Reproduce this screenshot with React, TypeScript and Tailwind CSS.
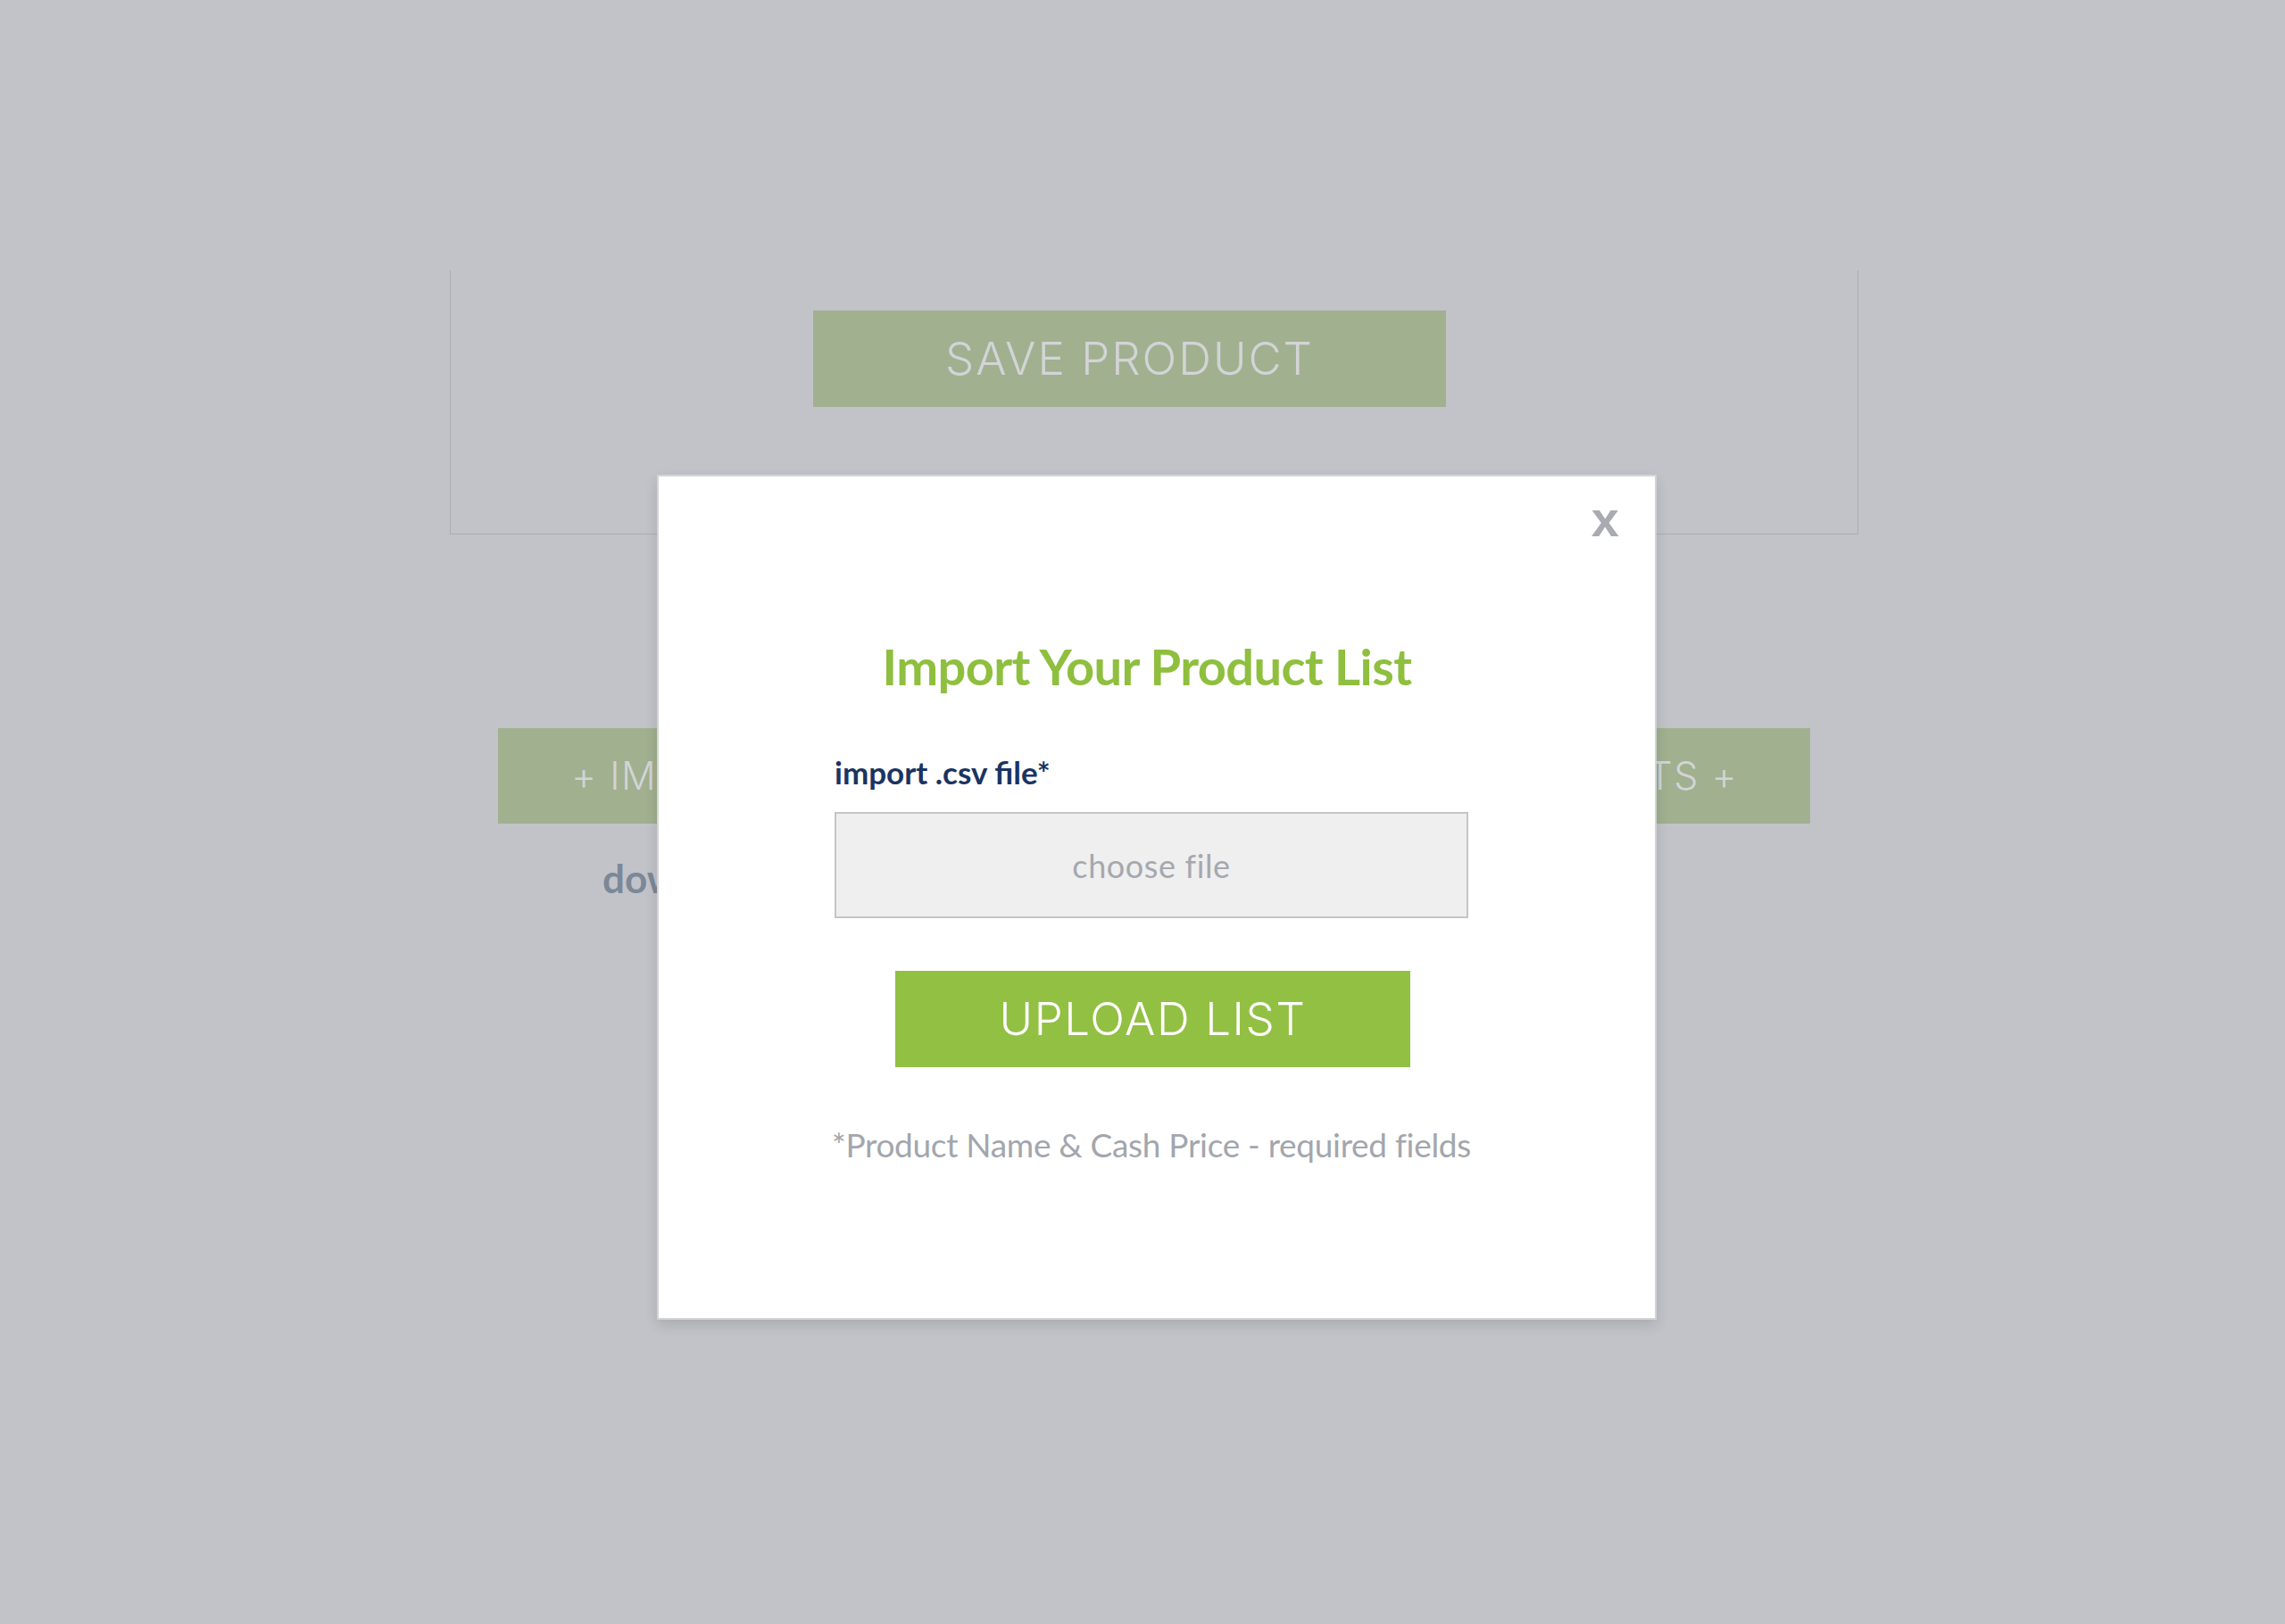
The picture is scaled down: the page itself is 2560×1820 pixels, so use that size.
import React from "react";

export default function App() {
  return (
    <div className="relative min-h-[1820px] w-full overflow-hidden bg-[#c1c3c8] font-[Lato,sans-serif]">
      {/* Background page (dimmed) */}
      <div className="ml-[504px] w-[1578px] pt-[303px]">
        <div className="h-[296px] border-x border-b border-[#abadb2] pl-[406px] pt-[45px]">
          <div className="flex h-[108px] w-[709px] items-center justify-center bg-[#a1b08f] font-[Inter,sans-serif] text-[51px] font-light tracking-[2px] text-[#d2d4d7]">
            SAVE PRODUCT
          </div>
        </div>

        <div className="mt-[217px] flex gap-[30px] px-[54px]">
          <div className="flex h-[107px] flex-1 items-center justify-start bg-[#a1b08f] pl-[82px] font-[Inter,sans-serif] text-[43px] font-light tracking-[1.5px] text-[#d2d4d7]">
            + IMPORT
          </div>
          <div className="flex h-[107px] flex-1 items-center justify-end bg-[#a1b08f] pr-[81px] font-[Inter,sans-serif] text-[43px] font-light tracking-[1.5px] text-[#d2d4d7]">
            EXPORT PRODUCTS +
          </div>
        </div>

        <div className="mt-[39px] pl-[171px] text-[44px] font-bold leading-[44px] text-[#7b8898]">
          download .csv template
        </div>
      </div>

      {/* Modal */}
      <div className="absolute left-[736px] top-[532px] h-[947px] w-[1120px] border-2 border-[#d4d5d9] bg-white shadow-[0_6px_14px_rgba(0,0,0,0.12)]">
        <button className="absolute right-[40px] top-[20px] font-['Liberation_Sans',Arial,sans-serif] text-[56px] font-bold leading-[56px] text-[#a9abb1]">
          x
        </button>

        <div className="ml-[197px] flex w-[710px] flex-col pt-[185px]">
          <h2 className="mr-[10px] whitespace-nowrap text-center text-[56px] font-bold leading-[56px] tracking-[-0.6px] text-[#8fbf3f]">
            Import Your Product List
          </h2>

          <label className="mt-[72px] text-[35px] font-bold leading-[36px] text-[#1b3461]">
            import .csv file*
          </label>

          <div className="mt-[27px] flex h-[119px] items-center justify-center border-2 border-[#c4c5c8] bg-[#efeff0] text-[36px] tracking-[0.6px] text-[#a5a8ae]">
            choose file
          </div>

          <button className="ml-[68px] mt-[59px] flex h-[108px] w-[577px] items-center justify-center bg-[#92c043] font-[Inter,sans-serif] text-[51px] font-light tracking-[1.6px] text-white">
            UPLOAD LIST
          </button>

          <p className="mt-[67px] self-center whitespace-nowrap text-center text-[37px] leading-[40px] tracking-[-0.3px] text-[#a3a6ad]">
            *Product Name &amp; Cash Price - required fields
          </p>
        </div>
      </div>
    </div>
  );
}
